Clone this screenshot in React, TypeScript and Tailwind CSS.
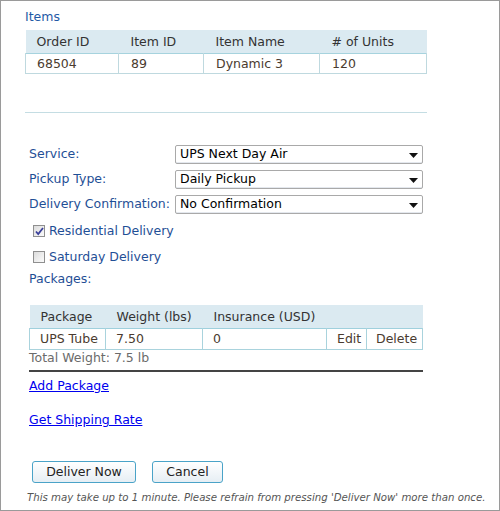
import { useState } from "react";

const items = [{ orderId: "68504", itemId: "89", name: "Dynamic 3", units: "120" }];

const packages = [{ type: "UPS Tube", weight: "7.50", insurance: "0" }];

function SelectBox({ value }: { value: string }) {
  return (
    <div className="relative flex h-[19px] w-[248px] items-center rounded-[2px] border border-[#a9a9a9] bg-white pl-[4px] text-[12.5px] text-black shadow-[inset_0_-1px_0_#e4e8ee]">
      <span>{value}</span>
      <svg className="absolute right-[4px] top-[7px]" width="9" height="5" viewBox="0 0 9 5">
        <path d="M0 0h9L4.5 5z" fill="#111" />
      </svg>
    </div>
  );
}

function Check({ checked, label }: { checked: boolean; label: string }) {
  return (
    <label className="flex h-[26px] items-center gap-[4px] pl-[4px] text-[12.5px] text-[#1f4f96]">
      <span className="flex h-[12px] w-[12px] items-center justify-center border border-[#8f8f8f] bg-gradient-to-br from-[#dcdcdc] to-[#fbfbfb]">
        {checked ? (
          <svg width="9" height="9" viewBox="0 0 9 9">
            <path d="M1 4.5l2.2 2.5L8 1" stroke="#3a3f9a" strokeWidth="1.8" fill="none" />
          </svg>
        ) : null}
      </span>
      {label}
    </label>
  );
}

export default function App() {
  const [service] = useState("UPS Next Day Air");

  return (
    <div
      className="h-[511px] w-[500px] overflow-hidden border border-[#9a9a9a] bg-white"
      style={{ fontFamily: '"DejaVu Sans", "Liberation Sans", sans-serif' }}
    >
      <div className="pl-[24px] pt-[7px]">
        <div className="h-[22px] text-[12.5px] leading-[18px] text-[#1f5aa6]">Items</div>

        <table className="w-[402px] border-collapse text-[12.5px]">
          <thead>
            <tr className="h-[23px] border-b border-[#a6d3de] bg-[#dbeaf1] text-left text-[#333]">
              <th className="w-[93px] pl-[11px] pt-[2px] font-normal">Order ID</th>
              <th className="w-[85px] pl-[12px] pt-[2px] font-normal">Item ID</th>
              <th className="w-[116px] pl-[12px] pt-[2px] font-normal">Item Name</th>
              <th className="pl-[12px] pt-[2px] font-normal"># of Units</th>
            </tr>
          </thead>
          <tbody>
            {items.map((it) => (
              <tr key={it.orderId} className="h-[20px] text-[#4a3b2f]">
                <td className="border border-t-0 border-[#bfd9df] pl-[11px] pt-[1px]">{it.orderId}</td>
                <td className="border border-t-0 border-[#bfd9df] pl-[12px] pt-[1px]">{it.itemId}</td>
                <td className="border border-t-0 border-[#bfd9df] pl-[12px] pt-[1px]">{it.name}</td>
                <td className="border border-t-0 border-[#bfd9df] pl-[12px] pt-[1px]">{it.units}</td>
              </tr>
            ))}
          </tbody>
        </table>

        <div className="mt-[38px] h-px w-[402px] bg-[#c4dde3]" />

        <div className="ml-[4px] mt-[29px] flex flex-col text-[12.5px] text-[#1f4f96]">
          <div className="flex h-[25px] items-center">
            <span className="w-[146px]">Service:</span>
            <SelectBox value={service} />
          </div>
          <div className="flex h-[25px] items-center">
            <span className="w-[146px]">Pickup Type:</span>
            <SelectBox value="Daily Pickup" />
          </div>
          <div className="flex h-[25px] items-center">
            <span className="w-[146px]">Delivery Confirmation:</span>
            <SelectBox value="No Confirmation" />
          </div>
        </div>

        <div className="ml-[4px] mt-[1px] flex flex-col">
          <Check checked label="Residential Delivery" />
          <Check checked={false} label="Saturday Delivery" />
        </div>

        <div className="ml-[4px] h-[18px] text-[12.5px] leading-[18px] text-[#1f4f96]">Packages:</div>

        <table className="ml-[4px] mt-[17px] w-[394px] border-collapse text-[12.5px]">
          <thead>
            <tr className="h-[23px] border-b border-[#9fd0dd] bg-[#dbeaf1] text-left text-[#333]">
              <th className="w-[76px] pl-[11px] pt-[2px] font-normal">Package</th>
              <th className="w-[97px] pl-[11px] pt-[2px] font-normal">Weight (lbs)</th>
              <th className="w-[124px] pl-[11px] pt-[2px] font-normal">Insurance (USD)</th>
              <th className="w-[40px] font-normal" />
              <th className="font-normal" />
            </tr>
          </thead>
          <tbody>
            {packages.map((p) => (
              <tr key={p.type} className="h-[21px] text-[#4a3b2f]">
                <td className="border border-t-0 border-[#a9d3dd] pl-[10px] pt-[1px]">{p.type}</td>
                <td className="border border-t-0 border-[#a9d3dd] pl-[10px] pt-[1px]">{p.weight}</td>
                <td className="border border-t-0 border-[#a9d3dd] pl-[10px] pt-[1px]">{p.insurance}</td>
                <td className="border border-t-0 border-[#a9d3dd] pl-[10px] pt-[1px]">Edit</td>
                <td className="border border-t-0 border-[#a9d3dd] pl-[9px] pt-[1px]">Delete</td>
              </tr>
            ))}
          </tbody>
        </table>

        <div className="ml-[4px] h-[15px] text-[12.5px] leading-[15px] text-[#6b6b6b]">Total Weight: 7.5 lb</div>
        <div className="ml-[4px] mt-[5px] h-[2px] w-[394px] bg-[#444]" />

        <div className="ml-[4px] mt-[6px] h-[16px] text-[12.5px] leading-[16px]">
          <a href="#" className="text-[#0000ee] underline">Add Package</a>
        </div>
        <div className="ml-[4px] mt-[18px] h-[16px] text-[12.5px] leading-[16px]">
          <a href="#" className="text-[#0000ee] underline">Get Shipping Rate</a>
        </div>

        <div className="ml-[7px] mt-[33px] flex gap-[16px]">
          <button className="h-[22px] w-[104px] rounded-[3px] border border-[#4aa3c8] bg-gradient-to-b from-white to-[#e6eef4] pt-[1px] text-[12.5px] text-[#222]">
            Deliver Now
          </button>
          <button className="h-[22px] w-[71px] rounded-[3px] border border-[#4aa3c8] bg-gradient-to-b from-white to-[#e6eef4] pt-[1px] text-[12.5px] text-[#222]">
            Cancel
          </button>
        </div>

        <p className="ml-[2px] mt-[8px] whitespace-nowrap text-[10.2px] italic leading-[14px] text-[#555]">
          This may take up to 1 minute. Please refrain from pressing 'Deliver Now' more than once.
        </p>
      </div>
    </div>
  );
}
